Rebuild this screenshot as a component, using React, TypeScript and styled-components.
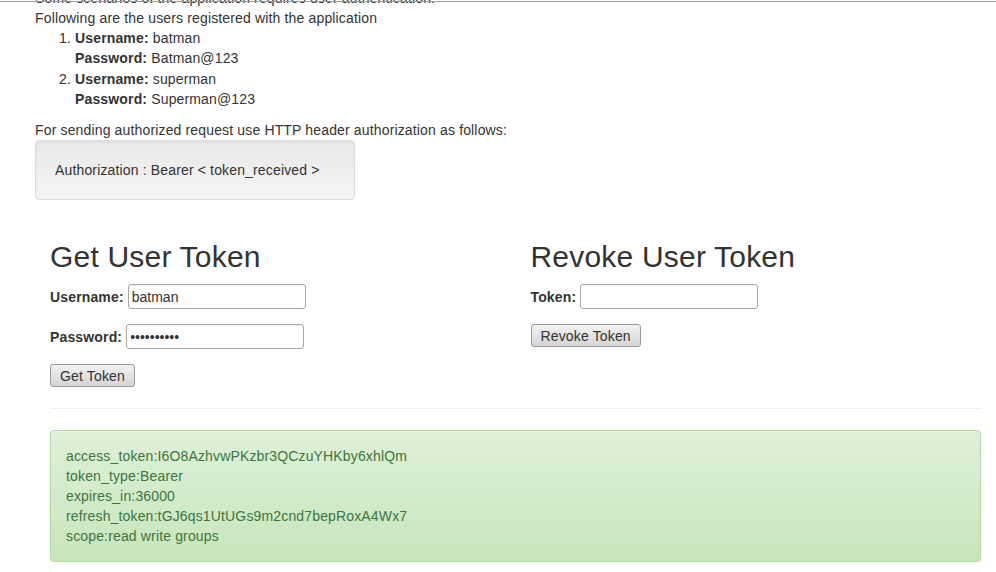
import styled, { createGlobalStyle } from "styled-components";

const GlobalStyle = createGlobalStyle`
  html, body {
    margin: 0;
    padding: 0;
    overflow: hidden;
    background: #fff;
  }
  body {
    font-family: "Liberation Sans", Arial, sans-serif;
    font-size: 14px;
    line-height: 20px;
    letter-spacing: 0.15px;
    color: #333;
  }
  * {
    box-sizing: border-box;
  }
`;

const users = [
  { username: "batman", password: "Batman@123" },
  { username: "superman", password: "Superman@123" },
];

const tokenResult = [
  ["access_token", "I6O8AzhvwPKzbr3QCzuYHKby6xhlQm"],
  ["token_type", "Bearer"],
  ["expires_in", "36000"],
  ["refresh_token", "tGJ6qs1UtUGs9m2cnd7bepRoxA4Wx7"],
  ["scope", "read write groups"],
];

const App = () => {
  return (
    <>
      <GlobalStyle />
      <TopEdge />
      <Page>
        <Intro>
          Some scenarios of the application requires user authentication.
          <br />
          Following are the users registered with the application
        </Intro>
        <UserList>
          {users.map((u) => (
            <li key={u.username}>
              <b>Username:</b> {u.username}
              <br />
              <b>Password:</b> {u.password}
            </li>
          ))}
        </UserList>
        <Intro $last>
          For sending authorized request use HTTP header authorization as
          follows:
        </Intro>
        <Well>Authorization : Bearer &lt; token_received &gt;</Well>

        <Row>
          <Col>
            <Heading>Get User Token</Heading>
            <Field>
              <Label>Username:</Label>
              <Input type="text" defaultValue="batman" />
            </Field>
            <Field>
              <Label>Password:</Label>
              <Input type="password" defaultValue="Batman@123" />
            </Field>
            <Button>Get Token</Button>
          </Col>
          <Col>
            <Heading>Revoke User Token</Heading>
            <Field>
              <Label>Token:</Label>
              <Input type="text" />
            </Field>
            <Button>Revoke Token</Button>
          </Col>
          <FullCol>
            <Divider />
            <SuccessAlert>
              {tokenResult.map(([k, v]) => (
                <div key={k}>
                  {k}:{v}
                </div>
              ))}
            </SuccessAlert>
          </FullCol>
        </Row>
      </Page>
    </>
  );
};

const TopEdge = styled.div`
  position: fixed;
  top: 1px;
  left: 0;
  right: 0;
  height: 1px;
  background: #9c9c9c;
  z-index: 2;
`;

const Page = styled.div`
  margin-top: -12px;
  padding-left: 35px;
`;

const Intro = styled.p<{ $last?: boolean }>`
  margin: 0 0 ${(p) => (p.$last ? "0" : "10px")};
`;

const UserList = styled.ol`
  margin: -10px 0 11px;
  padding-left: 40px;

  li {
    margin-bottom: 1px;
  }
`;

const Well = styled.div`
  display: inline-block;
  vertical-align: top;
  width: 320px;
  min-height: 20px;
  padding: 19px;
  margin-bottom: 20px;
  border: 1px solid #dcdcdc;
  border-radius: 4px;
  background: linear-gradient(to bottom, #e8e8e8 0, #f5f5f5 100%);
  box-shadow: inset 0 1px 3px rgba(0, 0, 0, 0.05),
    0 1px 0 rgba(255, 255, 255, 0.1);
`;

const Row = styled.div`
  display: grid;
  grid-template-columns: 1fr 1fr;
  width: 961px;
`;

const Col = styled.div`
  padding: 0 15px;
`;

const FullCol = styled.div`
  grid-column: 1 / -1;
  padding: 0 15px;
`;

const Heading = styled.h2`
  margin: 20px 0 11px;
  font-size: 30px;
  font-weight: 500;
  line-height: 33px;
  letter-spacing: 0.2px;
  color: #333;
`;

const Field = styled.div`
  display: flex;
  align-items: center;
  gap: 4px;
  margin-bottom: 15px;
`;

const Label = styled.label`
  font-weight: bold;
`;

const Input = styled.input`
  width: 178px;
  height: 25px;
  padding: 1px 3px;
  border: 1px solid #a9a9a9;
  border-radius: 3px;
  font-family: "Liberation Sans", Arial, sans-serif;
  font-size: 14px;
  color: #333;
  background: #fff;
  box-shadow: inset 0 1px 1px rgba(0, 0, 0, 0.06);
`;

const Button = styled.button`
  display: block;
  height: 23px;
  padding: 0 9px;
  border: 1px solid #9a9a9a;
  border-radius: 3px;
  background: linear-gradient(to bottom, #f3f3f3 0, #d4d4d4 100%);
  font-family: "Liberation Sans", Arial, sans-serif;
  font-size: 14px;
  line-height: 20px;
  letter-spacing: 0.15px;
  color: #333;
`;

const Divider = styled.hr`
  margin: 21px 0 21px;
  border: 0;
  border-top: 1px solid #eee;
`;

const SuccessAlert = styled.div`
  padding: 15px;
  border: 1px solid #b2dba1;
  border-radius: 4px;
  color: #3c763d;
  background: linear-gradient(to bottom, #dff0d8 0, #c8e5bc 100%);
  box-shadow: inset 0 1px 0 rgba(255, 255, 255, 0.25),
    0 1px 2px rgba(0, 0, 0, 0.05);
`;

export default App;
